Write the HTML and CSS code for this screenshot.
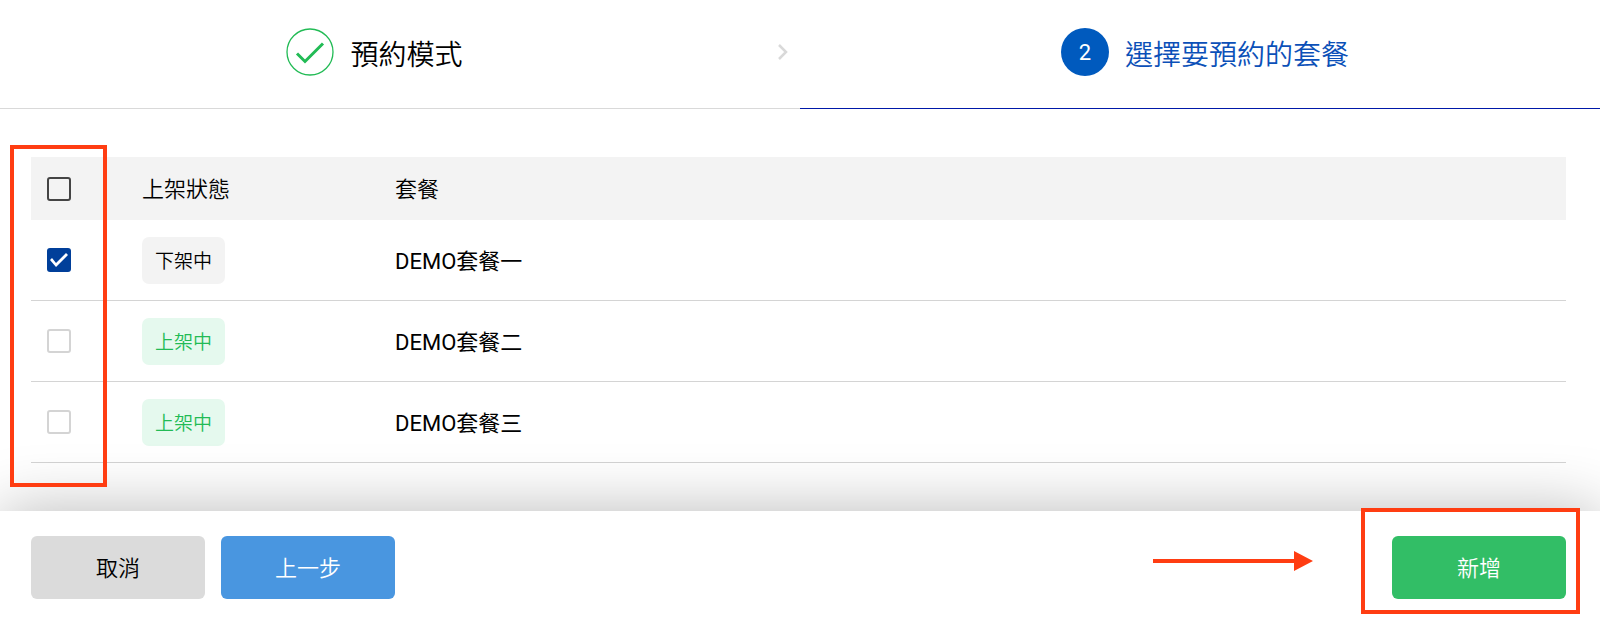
FILE: index.html
```html
<!doctype html>
<html lang="zh-Hant">
<head>
  <meta charset="utf-8">
  <meta name="viewport" content="width=device-width, initial-scale=1.0">
  <title>選擇要預約的套餐</title>
  <link rel="stylesheet" href="styles.css">
</head>
<body>

<ol class="stepper">
  <li class="step done">
    <div class="step-content">
      <span class="step-icon">
        <svg viewBox="0 0 48 48" width="48" height="48" fill="none" stroke="#22bb55">
          <circle cx="24" cy="24" r="23" stroke-width="1.3"/>
          <path d="M11 25.5L19 33.5L37 15.5" stroke-width="3"/>
        </svg>
      </span>
      <span class="step-title">預約模式</span>
    </div>
    <svg class="chevron" viewBox="0 0 10 16" width="10" height="16" fill="none" stroke="#d9d9d9" stroke-width="2.5">
      <path d="M1 1L8 8L1 15"/>
    </svg>
  </li>
  <li class="step active">
    <div class="step-content">
      <span class="step-icon">2</span>
      <span class="step-title">選擇要預約的套餐</span>
    </div>
  </li>
</ol>

<main class="content">
  <div class="table-wrap">
    <table class="plans">
      <thead>
        <tr>
          <th class="col-check"><input type="checkbox" class="check check-all" aria-label="全選"></th>
          <th class="col-status">上架狀態</th>
          <th>套餐</th>
        </tr>
      </thead>
      <tbody>
        <tr>
          <td class="col-check"><input type="checkbox" class="check" id="plan1" checked></td>
          <td><span class="badge">下架中</span></td>
          <td><label for="plan1">DEMO套餐一</label></td>
        </tr>
        <tr>
          <td class="col-check"><input type="checkbox" class="check" id="plan2"></td>
          <td><span class="badge on">上架中</span></td>
          <td><label for="plan2">DEMO套餐二</label></td>
        </tr>
        <tr>
          <td class="col-check"><input type="checkbox" class="check" id="plan3"></td>
          <td><span class="badge on">上架中</span></td>
          <td><label for="plan3">DEMO套餐三</label></td>
        </tr>
      </tbody>
    </table>
    <div class="mark mark-checks"></div>
  </div>
</main>

<footer class="actions">
  <button type="button" class="btn btn-cancel">取消</button>
  <button type="button" class="btn btn-prev">上一步</button>
  <div class="submit">
    <button type="button" class="btn btn-add">新增</button>
    <svg class="arrow" viewBox="0 0 160 20" width="160" height="20" fill="#ff3d12">
      <path d="M0 8H141V0L160 10L141 20V12H0Z"/>
    </svg>
    <div class="mark mark-add"></div>
  </div>
</footer>

</body>
</html>
```
FILE: styles.css
```css
* {
  box-sizing: border-box;
}

body {
  margin: 0;
  min-height: 100vh;
  display: flex;
  flex-direction: column;
  font-family: Roboto, "Noto Sans CJK TC", sans-serif;
  font-size: 22px;
  font-weight: 350;
  line-height: 1.5;
  color: #000;
  background: #fff;
}

/* stepper */
.stepper {
  display: flex;
  margin: 0;
  padding: 0;
  list-style: none;
}

.step {
  width: 50%;
  display: flex;
  align-items: center;
  height: 109px;
  padding-bottom: 4px;
  border-bottom: 1px solid #d9d9d9;
  font-size: 28px;
}

.step.active {
  padding-left: 10px;
  border-bottom-color: #0018a8;
  color: #0b50b8;
}

.step-content {
  flex: 1;
  display: flex;
  align-items: center;
  justify-content: center;
  gap: 16px;
}

.step-icon {
  display: flex;
  align-items: center;
  justify-content: center;
  width: 48px;
  height: 48px;
  border-radius: 50%;
}

.step-title {
  padding-top: 8px;
}

.step.active .step-icon {
  background: #005abe;
  color: #fff;
  font-size: 22px;
  font-weight: 400;
}

.chevron {
  margin: 0 12px 0 29px;
}

/* table */
.content {
  flex: 1;
  padding: 48px 34px 48px 31px;
}

.table-wrap {
  position: relative;
}

.plans {
  width: 100%;
  border-collapse: separate;
  border-spacing: 0;
  table-layout: fixed;
}

.plans th,
.plans td {
  padding: 0;
  text-align: left;
  font-weight: inherit;
  vertical-align: middle;
}

.plans th {
  height: 63px;
  padding-top: 2px;
  background: #f3f3f3;
}

.plans td {
  height: 81px;
  border-bottom: 1px solid #d4d4d4;
}

.plans .col-check {
  width: 111px;
  padding-top: 0;
  padding-left: 16px;
}

.col-status {
  width: 253px;
}

.plans label {
  display: block;
  padding-top: 2px;
  font-weight: 400;
}

.check {
  appearance: none;
  display: block;
  width: 24px;
  height: 24px;
  margin: 0;
  border: 2px solid #d4d4d4;
  border-radius: 3px;
  background: #fff;
}

.check-all {
  border-color: #444;
  background: none;
}

.check:checked {
  border: 0;
  background: #003f9a;
}

.check:checked::before {
  content: "";
  display: block;
  width: 24px;
  height: 24px;
  background: #fff;
  clip-path: polygon(3px 12px, 5px 10px, 9px 15px, 19px 5px, 21px 7px, 9px 19px);
}

.badge {
  display: inline-block;
  padding: 2px 13px 0;
  border-radius: 7px;
  background: #f3f3f3;
  font-size: 19px;
  line-height: 45px;
  vertical-align: middle;
}

.badge.on {
  background: #e5f9ee;
  color: #22bb55;
}

/* bottom bar */
.actions {
  position: sticky;
  bottom: 0;
  display: flex;
  gap: 16px;
  padding: 25px 34px 24px 31px;
  background: #fff;
  box-shadow: 0 0 64px rgba(0, 0, 0, 0.28);
}

.btn {
  width: 174px;
  height: 63px;
  padding: 2px 0 0;
  border: 0;
  border-radius: 6px;
  font: inherit;
  color: #fff;
}

.btn-cancel {
  background: #dbdbdb;
  color: #000;
}

.btn-prev {
  background: #4996e0;
}

.btn-add {
  display: block;
  background: #32be66;
}

.submit {
  position: relative;
  margin-left: auto;
}

/* red guide marks */
.mark {
  position: absolute;
  z-index: 2;
  border: 4px solid #ff3d12;
  pointer-events: none;
}

.mark-checks {
  top: -12px;
  bottom: -24px;
  left: -21px;
  width: 97px;
}

.mark-add {
  top: -28px;
  right: -14px;
  bottom: -15px;
  left: -31px;
}

.arrow {
  position: absolute;
  top: 15px;
  right: 253px;
}
```
